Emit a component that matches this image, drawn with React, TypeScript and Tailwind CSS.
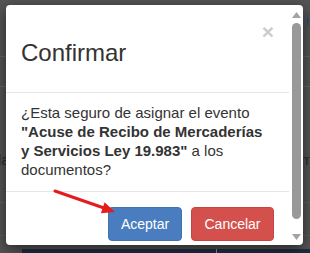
import React from "react";

const font = { fontFamily: '"Liberation Sans", Arial, Helvetica, sans-serif' };

export default function App() {
  return (
    <div
      className="relative w-[310px] h-[253px] overflow-hidden bg-[#545454]"
      style={font}
    >
      {/* dimmed page behind the modal */}
      <div className="flex flex-col h-full">
        <div className="h-[57px] border-b border-[#666] flex justify-end items-start pt-[12px] pr-[1px]">
          <span className="text-[15px] leading-[16px] text-[#2a4a78]">i</span>
        </div>
        <div className="h-[30px] border-b border-[#666]" />
        <div className="h-[62px]" />
        <div className="h-[22px] flex justify-between items-center text-[15px] text-[#2b2b2b]">
          <span className="-ml-[2px]">la</span>
          <span className="-mr-[3px]">m</span>
        </div>
        <div className="h-[32px] border-b border-[#5f5f5f]" />
        <div className="h-[33px] border-b border-[#5f5f5f]" />
        <div className="flex-1 flex items-end">
          <div className="ml-[22px] flex-1 h-[4px] bg-[#1f2d44] flex">
            <div className="w-[195px] border-r border-[#8a93a3]" />
          </div>
        </div>
      </div>

      {/* modal */}
      <div className="absolute inset-0 pl-[6px] pt-[5px]">
        <div className="w-[297px] h-[240px] bg-white rounded-[4px] shadow-[0_4px_14px_rgba(0,0,0,0.55)] flex overflow-hidden">
          <div className="flex-1 flex flex-col">
            {/* header */}
            <div className="h-[88px] border-b border-[#e5e5e5] flex items-start justify-between pl-[15px] pr-[15px] pt-[35px]">
              <h4 className="text-[24px] leading-[26px] text-[#333]">Confirmar</h4>
              <span className="-mt-[19px] text-[21px] leading-[21px] font-bold text-[#cccccc]">×</span>
            </div>
            {/* body */}
            <div className="pl-[15px] pr-[22px] pt-[10px] pb-[12px] border-b border-[#e5e5e5] text-[15px] leading-[19px] text-[#333]">
              ¿Esta seguro de asignar el evento{" "}
              <b>"Acuse de Recibo de Mercaderías y Servicios Ley 19.983"</b> a los
              documentos?
            </div>
            {/* footer */}
            <div className="flex justify-end gap-[9px] pt-[15px] pr-[15px]">
              <button className="h-[34px] w-[74px] rounded-[4px] bg-[#4a7dbf] border border-[#4272b0] text-white text-[14px]">
                Aceptar
              </button>
              <button className="h-[34px] w-[83px] rounded-[4px] bg-[#d4504c] border border-[#c9443f] text-white text-[14px]">
                Cancelar
              </button>
            </div>
          </div>
          {/* scrollbar */}
          <div className="w-[14px] flex flex-col items-start pl-[3px] pt-[7px] pb-[5px]">
            <svg width="9" height="6" viewBox="0 0 9 6">
              <polygon points="4.5,0 9,6 0,6" fill="#a3a3a3" />
            </svg>
            <div className="mt-[5px] w-[9px] h-[196px] rounded-full bg-[#999]" />
            <div className="flex-1" />
            <svg width="9" height="6" viewBox="0 0 9 6">
              <polygon points="0,0 9,0 4.5,6" fill="#a3a3a3" />
            </svg>
          </div>
        </div>
      </div>

      {/* red arrow annotation */}
      <svg className="absolute inset-0 pointer-events-none" width="310" height="253">
        <line x1="55" y1="191" x2="104" y2="208" stroke="#e51c1c" strokeWidth="3" strokeLinecap="round" />
        <polygon points="115,212 100.9,213.2 104.6,202.3" fill="#e51c1c" />
      </svg>
    </div>
  );
}
